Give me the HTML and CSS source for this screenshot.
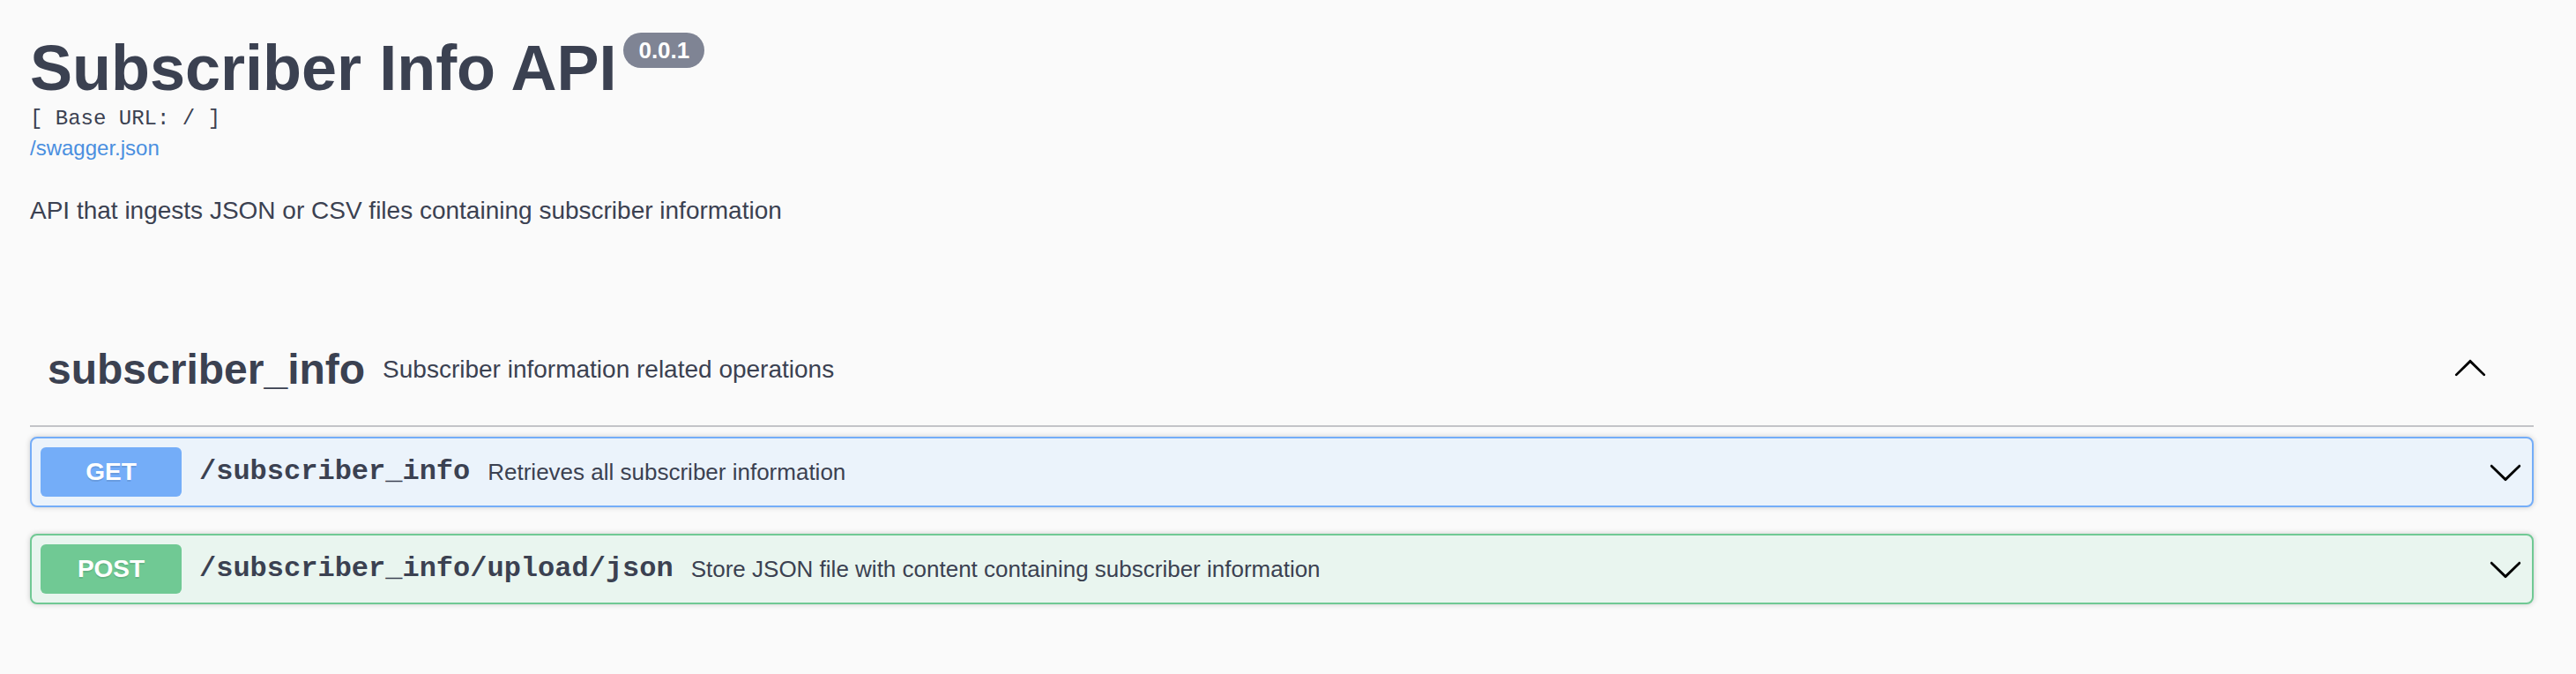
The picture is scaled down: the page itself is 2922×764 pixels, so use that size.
FILE: index.html
```html
<!DOCTYPE html>
<html lang="en">
<head>
<meta charset="utf-8">
<title>Subscriber Info API</title>
<link rel="stylesheet" href="styles.css">
</head>
<body>
<div class="wrapper">
  <section class="info">
    <h2 class="title"><span class="title-text">Subscriber Info API</span><small class="version">0.0.1</small></h2>
    <pre class="base-url">[ Base URL: / ]</pre>
    <a class="link" href="#">/swagger.json</a>
    <p class="description">API that ingests JSON or CSV files containing subscriber information</p>
  </section>

  <section class="tag-section">
    <h3 class="tag">
      <span class="tag-name">subscriber_info</span>
      <small class="tag-desc">Subscriber information related operations</small>
      <button class="expand" type="button">
        <svg class="arrow" viewBox="0 0 20 20" width="40" height="40" aria-hidden="true"><path d="M17.418 14.908c.272.268.709.268.979 0s.271-.701 0-.969l-7.908-7.83c-.27-.268-.707-.268-.979 0l-7.908 7.83c-.27.268-.27.701 0 .969.271.268.709.268.979 0L10 7.767l7.418 7.141z"/></svg>
      </button>
    </h3>

    <div class="opblock opblock-get">
      <div class="summary">
        <span class="method">GET</span>
        <span class="path">/subscriber_info</span>
        <span class="summary-desc">Retrieves all subscriber information</span>
        <svg class="arrow" viewBox="0 0 20 20" width="40" height="40" aria-hidden="true"><path d="M17.418 6.109c.272-.268.709-.268.979 0s.271.701 0 .969l-7.908 7.83c-.27.268-.707.268-.979 0l-7.908-7.830c-.27-.268-.27-.701 0-.969.271-.268.709-.268.979 0L10 13.25l7.418-7.141z"/></svg>
      </div>
    </div>

    <div class="opblock opblock-post">
      <div class="summary">
        <span class="method">POST</span>
        <span class="path">/subscriber_info/upload/json</span>
        <span class="summary-desc">Store JSON file with content containing subscriber information</span>
        <svg class="arrow" viewBox="0 0 20 20" width="40" height="40" aria-hidden="true"><path d="M17.418 6.109c.272-.268.709-.268.979 0s.271.701 0 .969l-7.908 7.83c-.27.268-.707.268-.979 0l-7.908-7.83c-.27-.268-.27-.701 0-.969.271-.268.709-.268.979 0L10 13.25l7.418-7.141z"/></svg>
      </div>
    </div>
  </section>
</div>
</body>
</html>
```

FILE: styles.css
```css
html, body {
  margin: 0;
  padding: 0;
}

body {
  background: #fafafa;
  color: #3b4151;
  font-family: "Liberation Sans", Arial, Helvetica, sans-serif;
}

.wrapper {
  padding: 0 48px 0 34px;
}

/* ---------- info ---------- */
.info {
  padding-top: 36px;
}

.title {
  display: flex;
  align-items: flex-start;
  margin: 0;
  font-size: 72px;
  line-height: 83px;
  font-weight: 700;
  color: #3b4151;
}

.version {
  margin: 1px 0 0 8px;
  padding: 5px 17px;
  font-size: 26px;
  line-height: 30px;
  font-weight: 700;
  color: #fff;
  background: #7f8494;
  border-radius: 57px;
}

.base-url {
  margin: 2px 0 0;
  font-family: "Liberation Mono", "Courier New", monospace;
  font-size: 24px;
  line-height: 28px;
  font-weight: 400;
  color: #3b4151;
}

.link {
  display: block;
  margin-top: 5px;
  font-size: 24px;
  line-height: 28px;
  color: #4a8fe0;
  text-decoration: none;
}

.description {
  margin: 37px 0 0;
  font-size: 28px;
  line-height: 40px;
  color: #3b4151;
}

/* ---------- tag ---------- */
.tag-section {
  margin-top: 97px;
}

.tag {
  display: flex;
  align-items: center;
  height: 126px;
  margin: 0 0 11px;
  padding: 0 40px 0 20px;
  border-bottom: 2px solid #c3c4c8;
  font-size: 48px;
  font-weight: 700;
  color: #3b4151;
}

.tag-name {
  line-height: 56px;
}

.tag-desc {
  flex: 1;
  padding: 0 20px;
  font-size: 28px;
  line-height: 34px;
  font-weight: 400;
  color: #3b4151;
}

.expand {
  display: flex;
  padding: 0 12px;
  margin: 0 0 7px;
  border: 0;
  background: none;
}

.arrow {
  display: block;
  width: 40px;
  height: 40px;
  fill: #000;
  flex: none;
}

/* ---------- operations ---------- */
.opblock {
  margin: 0 0 30px;
  border: 2px solid;
  border-radius: 8px;
  box-shadow: 0 0 6px rgba(0, 0, 0, 0.19);
}

.opblock-get {
  border-color: #74adf8;
  background: #ebf3fb;
}

.opblock-post {
  border-color: #70c994;
  background: #e9f5ef;
}

.summary {
  display: flex;
  align-items: center;
  padding: 10px;
}

.method {
  min-width: 160px;
  padding: 12px 0;
  font-size: 28px;
  line-height: 32px;
  font-weight: 700;
  text-align: center;
  color: #fff;
  border-radius: 6px;
  text-shadow: 0 2px 0 rgba(0, 0, 0, 0.1);
}

.opblock-get .method {
  background: #74adf8;
}

.opblock-post .method {
  background: #70c994;
}

.path {
  padding: 0 20px;
  font-family: "Liberation Mono", "Courier New", monospace;
  font-size: 32px;
  line-height: 40px;
  font-weight: 700;
  color: #3b4151;
}

.summary-desc {
  flex: 1;
  font-size: 26px;
  line-height: 32px;
  color: #3b4151;
}
```
